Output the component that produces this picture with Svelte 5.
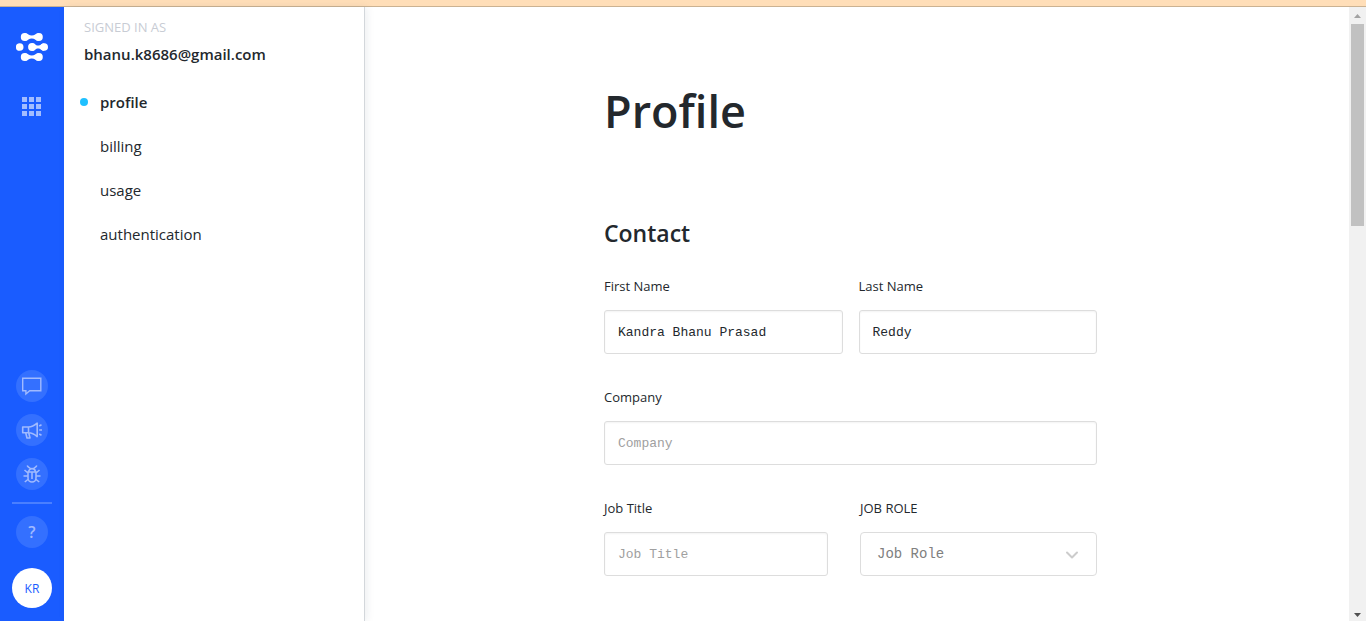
<script>
  const links = ['profile', 'billing', 'usage', 'authentication'];
  let active = $state('profile');
  let firstName = $state('Kandra Bhanu Prasad');
  let lastName = $state('Reddy');
  let company = $state('');
  let jobTitle = $state('');
  let jobRole = $state('');
</script>

<div class="page">
  <div class="notice"></div>
  <div class="shell">
    <nav class="rail" aria-label="Main">
      <a class="logo" href="#home" aria-label="Home">
        <svg width="32" height="28" viewBox="0 0 32 28" fill="#fff">
          <circle cx="8.7" cy="4" r="3.9" /><circle cx="22.9" cy="4" r="3.9" />
          <path d="M9 .2C12 .4 13 2.6 15.8 2.6S19.6.4 22.6.2V7.8C19.6 7.6 18.6 5.4 15.8 5.4S12 7.6 9 7.8Z" />
          <circle cx="3.7" cy="14" r="3.8" />
          <circle cx="16" cy="14" r="3.9" /><circle cx="28.2" cy="14" r="3.8" />
          <path d="M16 10.2C19 10.4 19.5 12.6 22.1 12.6S25.2 10.4 28.2 10.2V17.8C25.2 17.6 24.7 15.4 22.1 15.4S19 17.6 16 17.8Z" />
          <circle cx="8.7" cy="24" r="3.9" /><circle cx="22.9" cy="24" r="3.9" />
          <path d="M9 20.2C12 20.4 13 22.6 15.8 22.6S19.6 20.4 22.6 20.2V27.8C19.6 27.6 18.6 25.4 15.8 25.4S12 27.6 9 27.8Z" />
        </svg>
      </a>
      <button class="apps" aria-label="Applications">
        <svg width="20" height="20" viewBox="0 0 20 20" fill="#a3bdff">
          {#each [0, 7, 14] as y}
            {#each [0, 7, 14] as x}
              <rect {x} {y} width="5" height="5" />
            {/each}
          {/each}
        </svg>
      </button>
      <div class="tools">
        <button class="round" aria-label="Chat">
          <svg width="20" height="20" viewBox="0 0 20 20" fill="none" stroke="#a0baff" stroke-width="1.4">
            <path d="M.7 2.2H18.8V14.8H7.7L3.9 18V14.8H.7Z" />
          </svg>
        </button>
        <button class="round" aria-label="Announcements">
          <svg width="22" height="20" viewBox="0 0 22 20" fill="none" stroke="#a0baff" stroke-width="1.6" stroke-linejoin="round">
            <path d="M1.7 7H7.5V12.8H1.7ZM7.5 7C10.5 7 13.5 5.5 16.2 3.2V16.6C13.5 14.3 10.5 12.8 7.5 12.8M4.7 12.8L6 18H9L7.7 12.8" />
            <path d="M18.2 6L20.5 4.8M18.2 10H21M18.2 14L20.5 15.2" />
          </svg>
        </button>
        <button class="round" aria-label="Report a bug">
          <svg width="20" height="20" viewBox="0 0 20 20" fill="none" stroke="#a0baff" stroke-width="1.6">
            <path d="M10 8V15M6 8H14V14A4 4 0 0 1 6 14ZM6.7 8C6.7 3.5 13.3 3.5 13.3 8M5.2 1.5C6 3.5 7.2 3 8.5 4.8M14.8 1.5C14 3.5 12.8 3 11.5 4.8M6 9L2.5 6M14 9L17.5 6M6 12H1.5M14 12H18.5M6.5 15L2.8 18M13.5 15L17.2 18" />
          </svg>
        </button>
        <hr />
        <button class="round help" aria-label="Help">?</button>
        <button class="avatar" aria-label="Account">KR</button>
      </div>
    </nav>

    <aside class="side">
      <p class="caption">SIGNED IN AS</p>
      <p class="email">bhanu.k8686@gmail.com</p>
      <ul>
        {#each links as link}
          <li>
            <a href={`#${link}`} class:active={active === link} onclick={() => (active = link)}>{link}</a>
          </li>
        {/each}
      </ul>
    </aside>

    <main>
      <form>
        <h1>Profile</h1>
        <h2>Contact</h2>
        <div class="row names">
          <div class="field">
            <label for="first">First Name</label>
            <input id="first" type="text" bind:value={firstName} />
          </div>
          <div class="field">
            <label for="last">Last Name</label>
            <input id="last" type="text" bind:value={lastName} />
          </div>
        </div>
        <div class="row">
          <div class="field">
            <label for="company">Company</label>
            <input id="company" type="text" placeholder="Company" bind:value={company} />
          </div>
        </div>
        <div class="row job">
          <div class="field">
            <label for="title">Job Title</label>
            <input id="title" type="text" placeholder="Job Title" bind:value={jobTitle} />
          </div>
          <div class="field">
            <label for="role">JOB ROLE</label>
            <div class="select">
              <select id="role" bind:value={jobRole}>
                <option value="">Job Role</option>
              </select>
              <svg width="14" height="8" viewBox="0 0 14 8" fill="none" stroke="#ccc" stroke-width="2" stroke-linecap="round" stroke-linejoin="round">
                <path d="M2 1.5L7 6.5L12 1.5" />
              </svg>
            </div>
          </div>
        </div>
      </form>
    </main>

    <div class="scrollbar" aria-hidden="true">
      <svg width="7" height="4" viewBox="0 0 7 4" fill="#a3a3a3"><path d="M0 4L3.5 0L7 4Z" /></svg>
      <div class="track"><div class="thumb"></div></div>
      <svg width="7" height="4" viewBox="0 0 7 4" fill="#505050"><path d="M0 0L3.5 4L7 0Z" /></svg>
    </div>
  </div>
</div>

<style>
  :global(body) {
    margin: 0;
    background: #fff;
  }
  .page {
    height: 100vh;
    display: flex;
    flex-direction: column;
    overflow: hidden;
    color: #23282d;
    font-family: 'Open Sans', 'Noto Sans', sans-serif;
    font-size: 16px;
  }
  .page * {
    box-sizing: border-box;
  }
  .notice {
    flex: none;
    height: 7px;
    background: #ffdeb8;
    border-bottom: 1px solid #cbb292;
  }
  .shell {
    flex: 1;
    min-height: 0;
    display: flex;
  }
  button {
    border: 0;
    padding: 0;
    font-family: inherit;
    cursor: pointer;
    display: flex;
    align-items: center;
    justify-content: center;
  }
  .rail {
    flex: none;
    width: 64px;
    padding: 26px 0 13px;
    background: #1a5cff;
    display: flex;
    flex-direction: column;
    align-items: center;
  }
  .logo,
  .logo svg {
    display: block;
  }
  .apps {
    margin-top: 36px;
    background: none;
  }
  .tools {
    margin-top: auto;
    display: flex;
    flex-direction: column;
    align-items: center;
    gap: 12px;
  }
  .round {
    width: 32px;
    height: 32px;
    border-radius: 50%;
    background: #3470ff;
  }
  .help {
    color: #a0baff;
    font-size: 16px;
    font-weight: 600;
  }
  hr {
    width: 40px;
    height: 2px;
    margin: 0;
    border: 0;
    background: #4a7fff;
  }
  .avatar {
    width: 40px;
    height: 40px;
    margin-top: 8px;
    border-radius: 50%;
    background: #fff;
    color: #1a5cff;
    font-size: 12px;
  }
  .side {
    flex: none;
    width: 301px;
    padding: 11px 20px;
    border-right: 1px solid #d3d7db;
    box-shadow: 2px 0 8px rgba(30, 50, 80, 0.08);
  }
  p {
    margin: 0;
  }
  .caption {
    color: #c8ccd4;
    font-size: 13px;
    line-height: 18px;
  }
  .email {
    margin-top: 6px;
    font-weight: 600;
    font-size: 15px;
    line-height: 24px;
  }
  ul {
    list-style: none;
    margin: 14px 0 0;
    padding: 0;
  }
  li a {
    position: relative;
    display: block;
    padding-left: 16px;
    line-height: 44px;
    font-size: 15px;
    color: inherit;
    text-decoration: none;
  }
  li a.active {
    font-weight: 600;
  }
  li a.active::before {
    content: '';
    position: absolute;
    left: -4px;
    top: 18px;
    width: 8px;
    height: 8px;
    border-radius: 50%;
    background: #1fc0ff;
  }
  main {
    flex: 1;
    min-width: 0;
    padding: 72px 29px 0 16px;
  }
  form {
    max-width: 493px;
    margin: 0 auto;
  }
  h1 {
    margin: 0;
    font-size: 45px;
    line-height: 64px;
    font-weight: 600;
  }
  h2 {
    margin: 74px 0 25px;
    font-size: 23px;
    line-height: 32px;
    font-weight: 600;
  }
  .row {
    display: grid;
    margin-bottom: 31px;
  }
  .names {
    grid-template-columns: 1fr 1fr;
    gap: 16px;
  }
  .job {
    grid-template-columns: 224fr 237fr;
    gap: 32px;
  }
  .field {
    min-width: 0;
  }
  label {
    display: block;
    margin-bottom: 11px;
    font-size: 13px;
    line-height: 25px;
  }
  input,
  select {
    display: block;
    width: 100%;
    height: 44px;
    padding: 0 13px;
    border: 1px solid #ddd;
    border-radius: 3px;
    background: #fff;
    color: #23282d;
    font-family: 'Liberation Mono', monospace;
    font-size: 13px;
  }
  input {
    box-shadow: inset 0 1px 2px rgba(0, 0, 0, 0.05);
  }
  input::placeholder {
    color: #a0a0a0;
  }
  .select {
    position: relative;
  }
  select {
    appearance: none;
    padding: 0 16px;
    border-radius: 4px;
    color: #808080;
    font-size: 14px;
  }
  .select svg {
    position: absolute;
    right: 18px;
    top: 19px;
    pointer-events: none;
  }
  .scrollbar {
    flex: none;
    width: 17px;
    padding: 7px 2px 4px;
    background: #f1f1f1;
    display: flex;
    flex-direction: column;
    align-items: center;
    gap: 6px;
  }
  .scrollbar svg {
    flex: none;
  }
  .track {
    flex: 1;
    width: 13px;
  }
  .thumb {
    height: calc(35% - 2px);
    background: #c1c1c1;
  }
</style>
